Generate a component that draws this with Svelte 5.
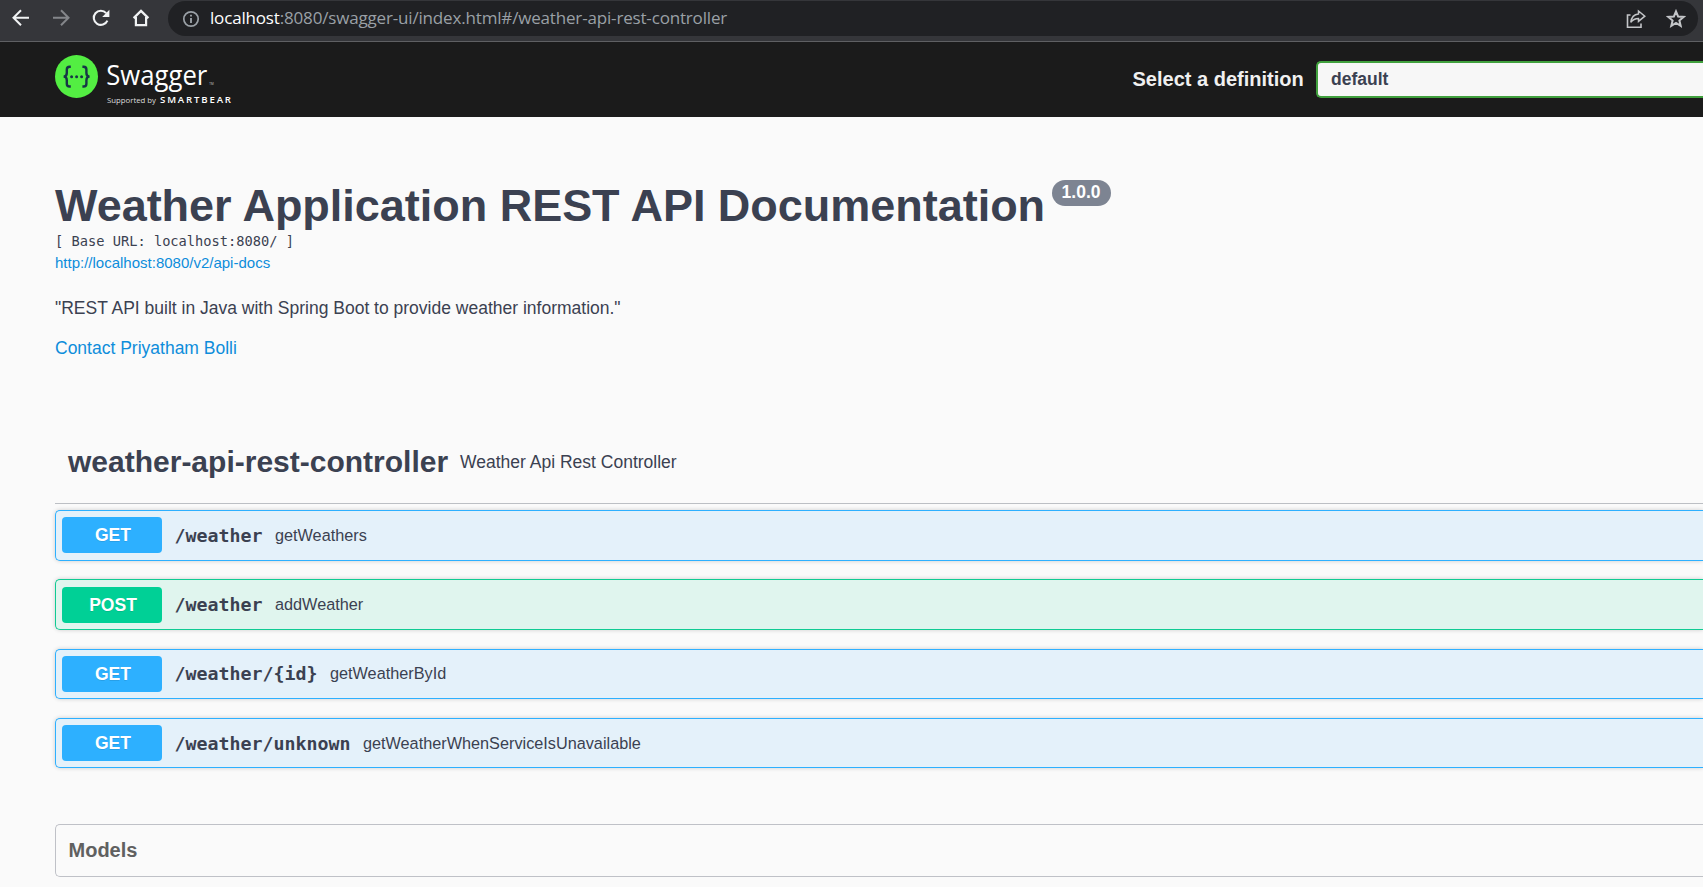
<script>
  const operations = [
    { method: 'GET', path: '/weather', summary: 'getWeathers' },
    { method: 'POST', path: '/weather', summary: 'addWeather' },
    { method: 'GET', path: '/weather/{id}', summary: 'getWeatherById' },
    { method: 'GET', path: '/weather/unknown', summary: 'getWeatherWhenServiceIsUnavailable' }
  ];
</script>

<div class="page">
  <div class="toolbar">
    <svg class="nav" viewBox="0 0 20 20"><path d="M18 9.8H3M10 2.3 2.5 9.8 10 17.3" fill="none" stroke="#f1f3f4" stroke-width="2" /></svg>
    <svg class="nav" viewBox="0 0 20 20"><path d="M2 9.8H17M10 2.3 17.5 9.8 10 17.3" fill="none" stroke="#84868a" stroke-width="2" /></svg>
    <svg class="nav" viewBox="0 0 20 20"><path d="M16.4 12.6A7.1 7.1 0 1 1 15.2 5.1" fill="none" stroke="#f1f3f4" stroke-width="2.1" /><path d="M18.4 1.8V9H11.2Z" fill="#f1f3f4" /></svg>
    <svg class="nav home" viewBox="0 0 20 20"><path d="M2.6 10.1 10 2.9 17.4 10.1M4.9 9V17.2H15.1V9" fill="none" stroke="#f1f3f4" stroke-width="2.2" /></svg>
    <div class="address">
      <svg class="info" viewBox="0 0 18 18"><circle cx="9" cy="9" r="7.2" fill="none" stroke="#9aa0a6" stroke-width="1.7" /><path d="M9 8V13M9 4.7V6.5" stroke="#9aa0a6" stroke-width="1.9" /></svg>
      <span class="url"><b>localhost</b>:8080/swagger-ui/index.html#/weather-api-rest-controller</span>
      <svg class="share" viewBox="0 0 20 20"><path d="M4.5 6H1.5V18.2H15V14.5" fill="none" stroke="#c3c5c8" stroke-width="1.6" /><path d="M12.5 2 18.8 7.2 12.5 12.4V9.4C9 9.4 6.7 10.6 4.8 13.4 5.3 8.7 8 5.3 12.5 4.9Z" fill="none" stroke="#c3c5c8" stroke-width="1.5" /></svg>
      <svg class="star" viewBox="0 0 20 20"><path d="M10 2.4 12.1 7.5 17.6 7.9 13.4 11.5 14.7 16.9 10 14 5.3 16.9 6.6 11.5 2.4 7.9 7.9 7.5Z" fill="none" stroke="#c3c5c8" stroke-width="2" /></svg>
    </div>
  </div>

  <header class="topbar">
    <svg class="logo" viewBox="0 0 180 54">
      <circle cx="21.5" cy="21.5" r="21.5" fill="#53ee42" />
      <g fill="none" stroke="#173647" stroke-width="2.4">
        <path d="M15.8 11.7H14.6Q11.8 11.7 11.8 14.5V18Q11.8 21.6 8.6 21.6 11.8 21.6 11.8 25.2V28.7Q11.8 31.5 14.6 31.5H15.8" />
        <path d="M27.4 11.7H28.6Q31.4 11.7 31.4 14.5V18Q31.4 21.6 34.6 21.6 31.4 21.6 31.4 25.2V28.7Q31.4 31.5 28.6 31.5H27.4" />
      </g>
      <g fill="#173647"><circle cx="16.6" cy="21.7" r="1.5" /><circle cx="21.6" cy="21.7" r="1.5" /><circle cx="26.6" cy="21.7" r="1.5" /></g>
      <text x="51.3" y="30.3" font-size="27.6" fill="#fff" textLength="101" lengthAdjust="spacingAndGlyphs">Swagger</text>
      <text x="154.3" y="30" font-size="3" fill="#ccc">TM</text>
      <text x="52" y="47.7" font-size="8" fill="#ddd" textLength="49" lengthAdjust="spacingAndGlyphs">Supported by</text>
      <text x="105" y="47.7" font-size="9.6" font-weight="600" fill="#fff" textLength="71" lengthAdjust="spacing">SMARTBEAR</text>
    </svg>
    <div class="definition">
      <span class="label">Select a definition</span>
      <div class="select">default</div>
    </div>
  </header>

  <main>
    <div class="heading">
      <h1>Weather Application REST API Documentation</h1>
      <span class="version">1.0.0</span>
    </div>
    <div class="base">[ Base URL: localhost:8080/ ]</div>
    <a class="docs">http://localhost:8080/v2/api-docs</a>
    <p class="about">"REST API built in Java with Spring Boot to provide weather information."</p>
    <a class="contact">Contact Priyatham Bolli</a>

    <div class="tag">
      <h2>weather-api-rest-controller</h2>
      <span>Weather Api Rest Controller</span>
    </div>
    <div class="operations">
      {#each operations as op}
        <div class="op" class:post={op.method === 'POST'}>
          <span class="method">{op.method}</span>
          <span class="path">{op.path}</span>
          <span class="summary">{op.summary}</span>
        </div>
      {/each}
    </div>
    <section class="models">Models</section>
  </main>
</div>

<style>
  :global(body) { margin: 0; overflow: hidden; }
  .page { height: 887px; overflow: hidden; background: #fafafa; color: #3b4151; font-family: "Liberation Sans", Arial, sans-serif; }
  .toolbar { box-sizing: border-box; height: 42px; padding: 1px 5px 0 11px; display: flex; align-items: flex-start; gap: 20px; background: #35363a; border-bottom: 1px solid #5f6063; }
  .nav { width: 20px; height: 20px; flex: none; margin-top: 7px; }
  .home { margin-left: -0.5px; margin-right: 0.5px; }
  .address { flex: 1; height: 35px; box-sizing: border-box; margin-left: -3px; padding: 0 12px 0 14px; border-radius: 18px; background: #202124; display: flex; align-items: center; }
  .info { width: 18px; height: 18px; flex: none; margin-left: -0.5px; }
  .url { flex: 1; margin: -1px 0 0 10.5px; font: 17px/34px "Open Sans", "Noto Sans", sans-serif; letter-spacing: -0.17px; color: #9aa0a6; white-space: nowrap; }
  .url b { font-weight: 400; color: #fff; }
  .share { width: 20px; height: 20px; margin-right: 20px; }
  .star { width: 20px; height: 20px; }
  .topbar { height: 75px; background: #1b1b1b; display: flex; justify-content: space-between; align-items: flex-start; padding-left: 55px; }
  .logo { width: 180px; height: 54px; margin-top: 13px; font-family: "Open Sans", sans-serif; }
  .definition { display: flex; align-items: center; margin-top: 19px; white-space: nowrap; }
  .label { width: 183.5px; font-size: 20px; font-weight: 700; line-height: 37px; color: #f0f0f0; }
  .select { box-sizing: border-box; width: 387px; height: 37px; padding-left: 13px; border: 2px solid #41a13e; border-right: 0; border-radius: 5px 0 0 5px; background: #f7f7f7; font-size: 17.5px; font-weight: 700; line-height: 32px; }
  main { padding: 63px 0 0 55px; }
  .heading { display: flex; align-items: flex-start; height: 50px; }
  h1 { margin: 0; font-size: 45px; line-height: 52px; letter-spacing: -0.02px; white-space: nowrap; }
  .version { margin-left: 6.5px; padding: 0 10px; height: 26px; border-radius: 26px; background: #7d8492; color: #fff; font-size: 17.5px; font-weight: 700; line-height: 25px; }
  .base { font: 13.7px/22px "DejaVu Sans Mono", monospace; white-space: pre; }
  .docs, .contact { display: block; color: #0d8ddb; }
  .docs { font-size: 15px; line-height: 22px; }
  .about { margin: 24px 0 20px; font-size: 17.5px; line-height: 20px; }
  .contact { font-size: 17.5px; line-height: 20px; }
  .tag { margin-top: 62px; height: 83px; padding-left: 13px; display: flex; align-items: center; gap: 12px; border-bottom: 1px solid #bcbfc4; }
  h2 { margin: 0; font-size: 30px; }
  .tag span { font-size: 17.5px; padding-top: 1px; }
  .operations { display: flex; flex-direction: column; gap: 18.75px; margin-top: 6px; }
  .op { box-sizing: border-box; height: 50.5px; padding-left: 6px; display: flex; align-items: center; border: 1px solid #2db0ff; border-right: 0; border-radius: 5px 0 0 5px; background: #e4f1fa; box-shadow: 0 0 4px rgba(0, 0, 0, .19); }
  .method { box-sizing: border-box; width: 100px; height: 36px; padding-left: 2px; border-radius: 4px; background: #2db0ff; color: #fff; font-size: 17.5px; font-weight: 700; line-height: 36px; text-align: center; text-shadow: 0 1px 0 rgba(0, 0, 0, .1); }
  .path { margin-left: 12.5px; font: 700 18.27px/24px "DejaVu Sans Mono", monospace; padding-top: 1px; }
  .summary { margin-left: 12.5px; font-size: 16.25px; }
  .post { border-color: #10cb93; background: #e0f5ee; }
  .post .method { background: #00d096; }
  .models { box-sizing: border-box; height: 52.5px; margin-top: 55.75px; padding-left: 12.5px; border: 1px solid #bfc1c7; border-right: 0; border-radius: 5px 0 0 5px; font-size: 20px; font-weight: 700; line-height: 50px; color: #606060; }
</style>
